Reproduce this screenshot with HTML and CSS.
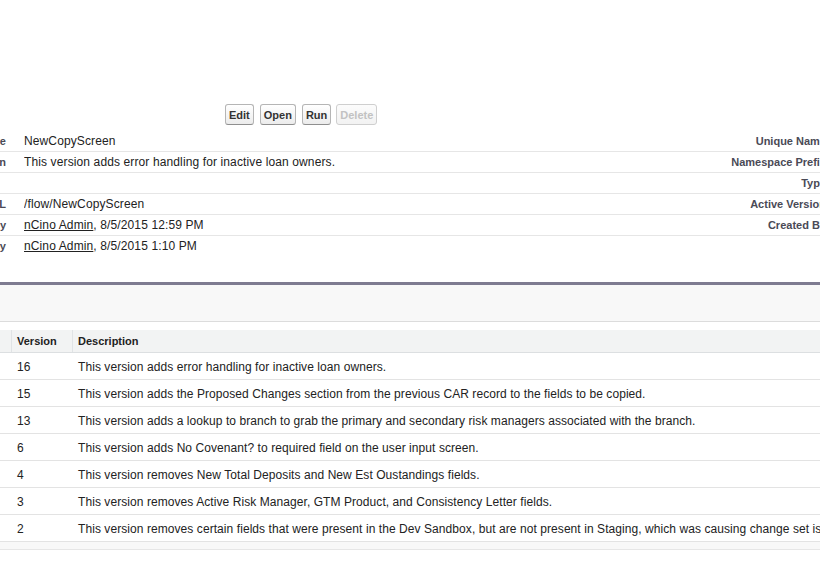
FILE: index.html
```html
<!DOCTYPE html>
<html>
<head>
<meta charset="utf-8">
<link rel="stylesheet" href="styles.css">
</head>
<body>
<div class="page">
  <div class="buttons">
    <button class="btn">Edit</button>
    <button class="btn">Open</button>
    <button class="btn">Run</button>
    <button class="btn btn-disabled" disabled>Delete</button>
  </div>
  <div class="detail">
    <div class="lbl">Flow Name</div><div class="val">NewCopyScreen</div><div class="lbl">Unique Name</div><div class="val">NewCopyScreen</div>
    <div class="lbl">Description</div><div class="val">This version adds error handling for inactive loan owners.</div><div class="lbl">Namespace Prefix</div><div class="val"></div>
    <div class="lbl"></div><div class="val"></div><div class="lbl">Type</div><div class="val">Flow</div>
    <div class="lbl">URL</div><div class="val">/flow/NewCopyScreen</div><div class="lbl">Active Version</div><div class="val">16</div>
    <div class="lbl">Created By</div><div class="val"><a href="#">nCino Admin</a>, 8/5/2015 12:59 PM</div><div class="lbl">Created By</div><div class="val"></div>
    <div class="lbl last">Last Modified By</div><div class="val last"><a href="#">nCino Admin</a>, 8/5/2015 1:10 PM</div><div class="lbl last"></div><div class="val last"></div>
  </div>

  <div class="block">
    <div class="block-head"></div>
    <div class="table">
      <div class="row head"><div class="cell">Action</div><div class="cell">Version</div><div class="cell">Description</div></div>
      <div class="row"><div class="cell"></div><div class="cell">16</div><div class="cell">This version adds error handling for inactive loan owners.</div></div>
      <div class="row"><div class="cell"></div><div class="cell">15</div><div class="cell">This version adds the Proposed Changes section from the previous CAR record to the fields to be copied.</div></div>
      <div class="row"><div class="cell"></div><div class="cell">13</div><div class="cell">This version adds a lookup to branch to grab the primary and secondary risk managers associated with the branch.</div></div>
      <div class="row"><div class="cell"></div><div class="cell">6</div><div class="cell">This version adds No Covenant? to required field on the user input screen.</div></div>
      <div class="row"><div class="cell"></div><div class="cell">4</div><div class="cell">This version removes New Total Deposits and New Est Oustandings fields.</div></div>
      <div class="row"><div class="cell"></div><div class="cell">3</div><div class="cell">This version removes Active Risk Manager, GTM Product, and Consistency Letter fields.</div></div>
      <div class="row"><div class="cell"></div><div class="cell">2</div><div class="cell">This version removes certain fields that were present in the Dev Sandbox, but are not present in Staging, which was causing change set issues.</div></div>
    </div>
    <div class="block-foot"></div>
  </div>
</div>
</body>
</html>
```

FILE: styles.css
```css
html, body {
  margin: 0;
  padding: 0;
  background: #fff;
  overflow: hidden;
  width: 820px;
  height: 567px;
}
body {
  font-family: "Liberation Sans", Arial, sans-serif;
  font-size: 12px;
  color: #222;
}
.page {
  margin-left: -120px;
  width: 1100px;
  padding-top: 104px;
}
.buttons {
  display: flex;
  gap: 6px;
  padding-left: 345px;
  height: 21px;
  margin-bottom: 6px;
}
.btn {
  font-family: "Liberation Sans", Arial, sans-serif;
  font-size: 11px;
  font-weight: bold;
  color: #333;
  height: 21px;
  line-height: 13px;
  padding: 1px 3px 0;
  margin: 0;
  border: 1px solid #b5b5b5;
  border-bottom-color: #8f8f8f;
  border-radius: 3px;
  background: linear-gradient(#ffffff, #ececec);
  cursor: pointer;
}
.btn-disabled {
  color: #c2c2c2;
  border-color: #cfcfcf;
  background: linear-gradient(#fcfcfc, #f2f2f2);
  margin-left: -1px;
}
.detail {
  display: grid;
  grid-template-columns: 144px 676px 144px 1fr;
}
.lbl, .val {
  line-height: 14px;
  padding-top: 3px;
  padding-bottom: 3px;
  box-sizing: border-box;
  border-bottom: 1px solid #e6e6e6;
  height: 21px;
  white-space: nowrap;
  overflow: hidden;
}
.lbl {
  text-align: right;
  padding-right: 18px;
  font-size: 11px;
  font-weight: bold;
  color: #4a4a56;
}
.val {
  letter-spacing: 0.12px;
}
.val a {
  color: #222;
  text-decoration: underline;
}
.lbl.last, .val.last {
  border-bottom-color: transparent;
}
.block {
  margin-top: 25px;
  border-top: 3px solid #7e7b91;
}
.block-head {
  height: 36px;
  background: #f8f8f8;
  border-bottom: 1px solid #dcdcdc;
  margin-bottom: 8px;
}
.row {
  display: grid;
  grid-template-columns: 131px 61px 1fr;
  height: 27px;
  box-sizing: border-box;
  border-bottom: 1px solid #e3e3e3;
  align-items: center;
  padding-top: 1px;
}
.cell {
  padding-left: 6px;
  white-space: nowrap;
  overflow: hidden;
  letter-spacing: 0.07px;
}
.row.head {
  height: 23px;
  padding-top: 0;
  background: #f2f3f3;
  border-bottom: 1px solid #dcdfe1;
  align-items: stretch;
}
.row.head .cell {
  font-size: 11px;
  font-weight: bold;
  color: #222;
  line-height: 23px;
  padding-left: 5px;
  letter-spacing: 0;
  border-left: 1px solid #e0e3e5;
}
.row.head .cell:first-child {
  border-left: none;
}
.block-foot {
  height: 7px;
  background: #f8f8f8;
  border-bottom: 1px solid #e6e6e6;
}
```
